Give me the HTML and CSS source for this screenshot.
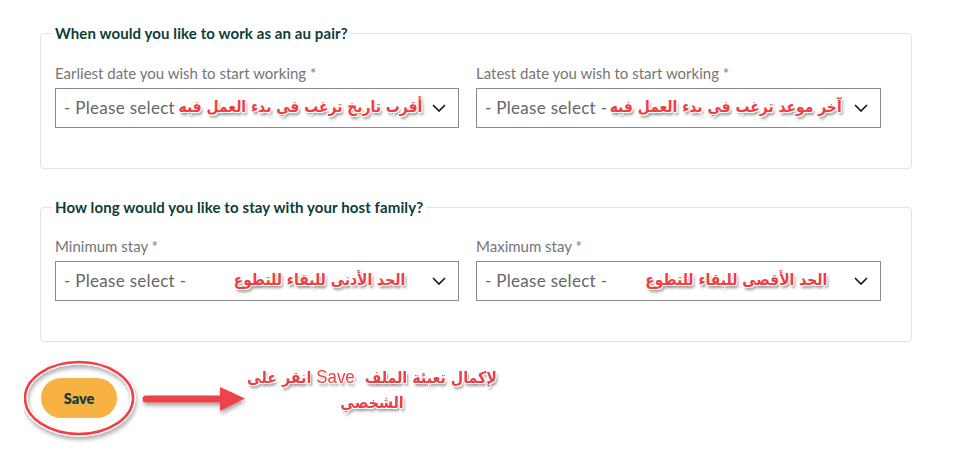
FILE: index.html
```html
<!DOCTYPE html>
<html lang="en">
<head>
<meta charset="utf-8">
<title>Au pair availability</title>
<link rel="stylesheet" href="styles.css">
</head>
<body>
<main class="page">
  <fieldset class="group group-first">
    <legend>When would you like to work as an au pair?</legend>
    <div class="row">
      <div class="field">
        <label class="label">Earliest date you wish to start working *</label>
        <div class="select">
          <span class="placeholder">- Please select -</span>
          <svg class="chev" viewBox="0 0 14 8" width="14" height="8"><path d="M1 1l6 6 6-6" fill="none" stroke="#111" stroke-width="1.6"/></svg>
          <span class="note note-1" dir="rtl">أقرب تاريخ ترغب في بدء العمل فيه</span>
        </div>
      </div>
      <div class="field">
        <label class="label">Latest date you wish to start working *</label>
        <div class="select">
          <span class="placeholder">- Please select -</span>
          <svg class="chev" viewBox="0 0 14 8" width="14" height="8"><path d="M1 1l6 6 6-6" fill="none" stroke="#111" stroke-width="1.6"/></svg>
          <span class="note note-2" dir="rtl">آخر موعد ترغب في بدء العمل فيه</span>
        </div>
      </div>
    </div>
  </fieldset>

  <fieldset class="group group-second">
    <legend>How long would you like to stay with your host family?</legend>
    <div class="row">
      <div class="field">
        <label class="label">Minimum stay *</label>
        <div class="select">
          <span class="placeholder">- Please select -</span>
          <svg class="chev" viewBox="0 0 14 8" width="14" height="8"><path d="M1 1l6 6 6-6" fill="none" stroke="#111" stroke-width="1.6"/></svg>
          <span class="note note-3" dir="rtl">الحد الأدنى للبقاء للتطوع</span>
        </div>
      </div>
      <div class="field">
        <label class="label">Maximum stay *</label>
        <div class="select">
          <span class="placeholder">- Please select -</span>
          <svg class="chev" viewBox="0 0 14 8" width="14" height="8"><path d="M1 1l6 6 6-6" fill="none" stroke="#111" stroke-width="1.6"/></svg>
          <span class="note note-4" dir="rtl">الحد الأقصى للبقاء للتطوع</span>
        </div>
      </div>
    </div>
  </fieldset>

  <div class="actions">
    <button class="save" type="button">Save</button>
    <svg class="callout" viewBox="0 0 240 90" width="240" height="90">
      <defs>
        <filter id="sh" x="-20%" y="-20%" width="140%" height="150%">
          <feDropShadow dx="1" dy="3" stdDeviation="2" flood-color="#000" flood-opacity="0.35"/>
        </filter>
      </defs>
      <ellipse cx="55" cy="38" rx="54" ry="36" fill="none" stroke="#fff" stroke-width="5" filter="url(#sh)"/>
      <ellipse cx="55" cy="38" rx="54" ry="36" fill="none" stroke="#ee4248" stroke-width="2.6"/>
      <g filter="url(#sh)">
        <line x1="122" y1="39" x2="200" y2="39" stroke="#ee4248" stroke-width="7" stroke-linecap="round"/>
        <polygon points="196,27 221,38.5 196,51" fill="#ee4248"/>
      </g>
    </svg>
    <p class="hint" dir="rtl">لإكمال تعبئة الملف&nbsp; <span class="hint-en">Save</span> انقر على<br>الشخصي</p>
  </div>
</main>
</body>
</html>
```

FILE: styles.css
```css
* { box-sizing: border-box; }

html, body {
  margin: 0;
  padding: 0;
  background: #ffffff;
}

body {
  font-family: Lato, "Open Sans", Arial, sans-serif;
  color: #555;
}

.page {
  width: 962px;
  height: 451px;
  padding: 24px 50px 0 40px;
  overflow: hidden;
}

.group {
  margin: 0;
  width: 872px;
  border: 1px solid #e3e3e3;
  border-radius: 4px;
  padding: 22px 30px 40px 14px;
  min-inline-size: 0;
}

.group-second {
  margin-top: 29px;
  padding-top: 21px;
}

.group legend {
  padding: 0 3px;
  margin-left: -3px;
  font-size: 15px;
  line-height: 18px;
  font-weight: 700;
  color: #0d3d36;
  letter-spacing: 0.1px;
}

.row {
  display: grid;
  grid-template-columns: 404px 405px;
  column-gap: 17px;
}

.field {
  display: flex;
  flex-direction: column;
}

.label {
  font-size: 15px;
  line-height: 18px;
  color: #757575;
  margin-bottom: 6px;
}

.select {
  position: relative;
  height: 40px;
  border: 1px solid #8a8a8a;
  display: flex;
  align-items: center;
  justify-content: space-between;
  padding: 0 12px 0 8px;
}

.placeholder {
  font-size: 17px;
  line-height: 20px;
  color: #666;
  letter-spacing: 0.3px;
}

.chev {
  display: block;
}

.note {
  position: absolute;
  top: 50%;
  transform: translateY(-54%) scaleX(0.87);
  transform-origin: right center;
  font-family: "DejaVu Sans", sans-serif;
  font-weight: 700;
  font-size: 16px;
  line-height: 20px;
  color: #ef3e42;
  white-space: nowrap;
  text-shadow:
    1px 0 0 #fff, -1px 0 0 #fff, 0 1px 0 #fff, 0 -1px 0 #fff,
    1px 1px 0 #fff, -1px -1px 0 #fff, 1px -1px 0 #fff, -1px 1px 0 #fff,
    2px 3px 3px rgba(0, 0, 0, 0.45);
}

.note-1 { right: 36px; }
.note-2 { right: 38px; }
.note-3 { right: 53px; }
.note-4 { right: 53px; }

.actions {
  position: relative;
  margin-top: 36px;
  height: 60px;
  padding-left: 1px;
}

.save {
  display: block;
  width: 76px;
  height: 40px;
  border: none;
  border-radius: 20px;
  background: #f8b244;
  color: #153d36;
  font-family: Lato, "Open Sans", Arial, sans-serif;
  font-weight: 800;
  font-size: 14.5px;
  padding: 0;
}

.callout {
  position: absolute;
  left: -16px;
  top: -18px;
  pointer-events: none;
}

.hint {
  position: absolute;
  left: 190px;
  top: -14px;
  width: 284px;
  margin: 0;
  text-align: center;
  font-family: "DejaVu Sans", sans-serif;
  font-weight: 700;
  font-size: 16px;
  line-height: 25px;
  color: #ef3e42;
  transform: scaleX(0.89);
  transform-origin: center;
  text-shadow:
    1px 0 0 #fff, -1px 0 0 #fff, 0 1px 0 #fff, 0 -1px 0 #fff,
    1px 1px 0 #fff, -1px -1px 0 #fff, 1px -1px 0 #fff, -1px 1px 0 #fff,
    2px 3px 3px rgba(0, 0, 0, 0.45);
}

.hint-en {
  font-family: "Liberation Sans", Arial, sans-serif;
  font-weight: 400;
  font-size: 19px;
}
```
